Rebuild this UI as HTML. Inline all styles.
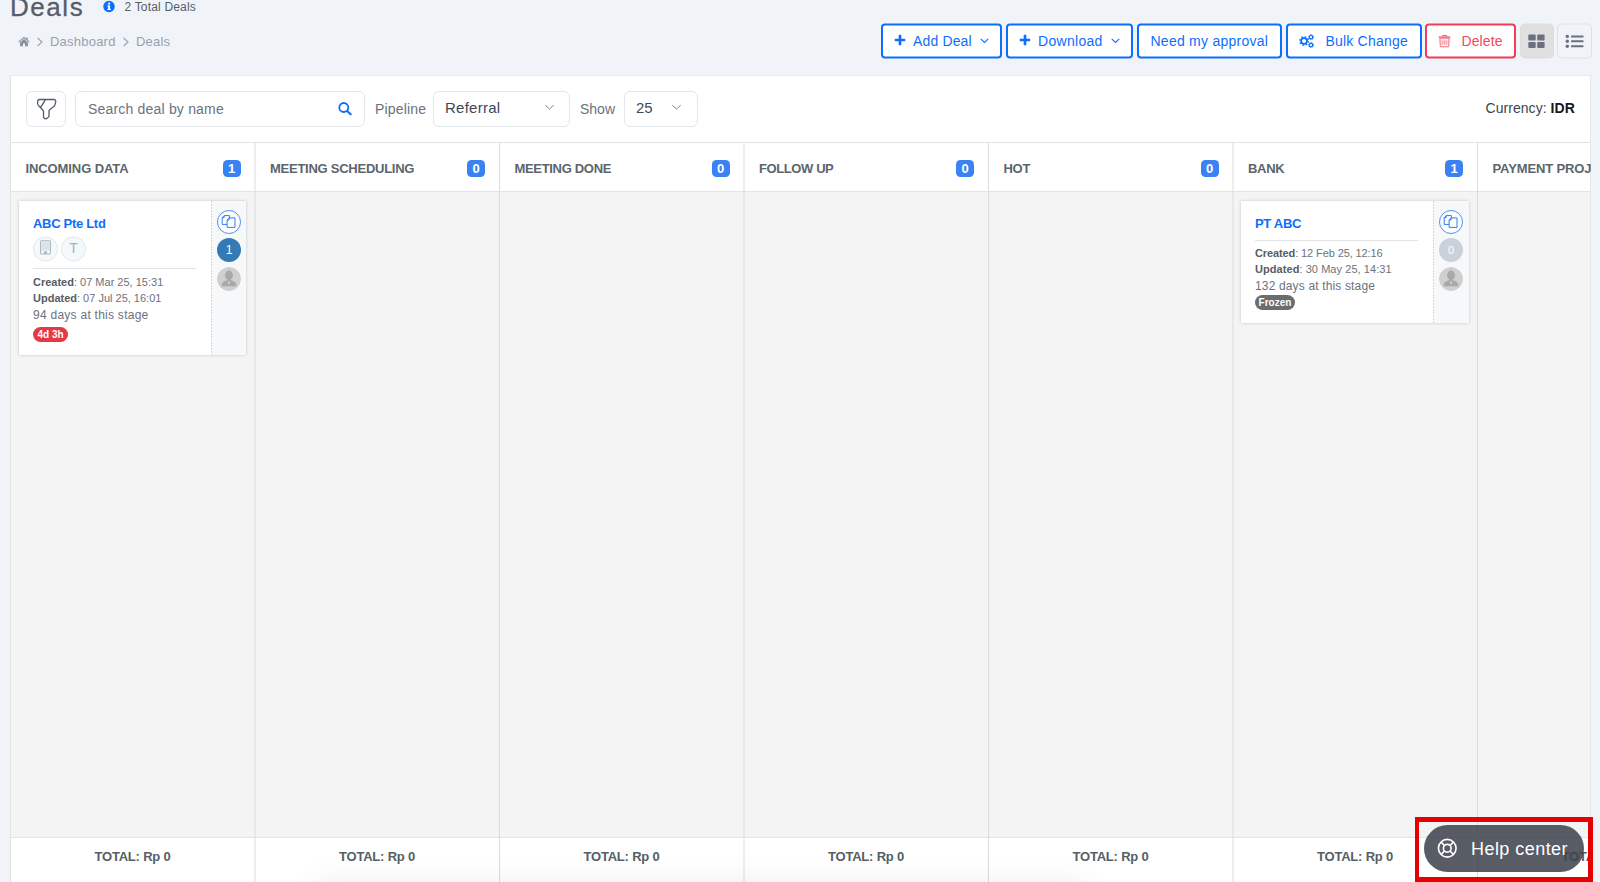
<!DOCTYPE html>
<html lang="en">
<head>
<meta charset="utf-8">
<title>Deals</title>
<style>
*{box-sizing:border-box;margin:0;padding:0}
html,body{width:1600px;height:882px;overflow:hidden}
body{background:#f0f4f9;font-family:"Liberation Sans",Arial,sans-serif;color:#575d6b;position:relative}
.abs{position:absolute}
.t{position:absolute;white-space:nowrap;line-height:1}
/* header */
#title{left:10px;top:-6px;font-size:26px;color:#575d6b;letter-spacing:1.550px;-webkit-text-stroke:.3px #575d6b}
#total{left:124.500px;top:1px;font-size:12px;color:#575d6b;letter-spacing:.18px}
.crumb{font-size:13px;color:#98a1ae;top:34.500px;letter-spacing:.22px}
/* buttons */
.btn{position:absolute;top:24px;height:35px;border:2px solid transparent;color:#0d6efd;font-size:14px}
.btn::before{content:"";position:absolute;left:-2px;top:-2px;right:-2px;bottom:-2px;border:2px solid #0d6efd;border-radius:4px;background:#fff;transform:translateY(-.5px) rotate(.0001deg)}
.btn>*{z-index:1}
.btn .t{top:8px}
.btn.red{color:#f04860}
.btn.red::before{border-color:#f03e57}
.sq{position:absolute;top:24px;width:34px;height:35px;border:1px solid transparent}
.sq::before{content:"";position:absolute;left:-1px;top:-1px;right:-1px;bottom:-1px;border-radius:5px;border:1px solid #dde1e6;background:#f0f4f9;transform:translateY(-.5px) rotate(.0001deg)}
.sq>*{z-index:1}
.sq.on::before{background:#e0e0e0;border-color:#dcdcdc}
/* panel */
#panel{left:10px;top:75px;width:1581px;height:820px;background:#fff;border:1px solid #e9eaec;border-left-color:#e1e2e3;border-right-color:#e6e7e9}
.inp{position:absolute;top:91px;height:36px;border:1px solid #e3e6ea;border-radius:6px;background:#fff}
.lbl{font-size:14px;color:#6a7280;top:102px}
.sel{font-size:15px;color:#3d4858;top:100px}
/* board */
.hline{position:absolute;left:11px;width:1579px;height:1px;background:#e3e3e3}
.col{position:absolute;top:192px;height:646px;background:#f4f4f4}
.vline{position:absolute;top:143px;width:1px;height:739px;background:#dcdcdc}
.hd{font-size:13px;font-weight:bold;color:#5b666c;top:162px;letter-spacing:-.26px}
.bdg{position:absolute;top:160px;width:18px;height:17px;border-radius:4.500px;background:#3a82f4;color:#fff;font-size:13px;font-weight:bold;text-align:center;line-height:17px}
.tot{position:absolute;top:850px;width:244px;text-align:center;font-size:13px;font-weight:bold;color:#545f66;line-height:1;letter-spacing:-.2px}
/* cards */
.card{position:absolute;background:#fff;box-shadow:0 0 3px rgba(120,140,150,.45);border-radius:1px}
.side{position:absolute;right:0;top:0;bottom:0;width:35px;background:#f7f8fa}
.side::before{content:"";position:absolute;left:0;top:0;bottom:0;width:1px;background:repeating-linear-gradient(to bottom,#d4d8dc 0,#d4d8dc 2px,#fbfcfc 2px,#fbfcfc 3px)}
.name{font-size:13px;font-weight:bold;color:#0d6efd;letter-spacing:-.3px}
.meta{font-size:11px;color:#6c727c}
.meta b{color:#575d66}
.stage{font-size:12px;color:#6c727c;letter-spacing:.26px}
.circ{position:absolute;border-radius:50%}
.pill{position:absolute;height:15px;border-radius:8px;color:#fff;font-size:10px;font-weight:bold;line-height:15px;text-align:center}
</style>
</head>
<body>

<!-- page header -->
<div class="t" id="title">Deals</div>
<svg class="abs" style="left:103px;top:0" width="12" height="13" viewBox="0 0 12 13"><circle cx="6" cy="6.500" r="5.700" fill="#0d6efd"/><rect x="5.100" y="5.500" width="2" height="4.200" fill="#fff"/><rect x="4.300" y="5.500" width="2" height="1" fill="#fff"/><rect x="4.300" y="8.900" width="3.600" height="1" fill="#fff"/><circle cx="6.100" cy="3.600" r="1.150" fill="#fff"/></svg>
<div class="t" id="total">2 Total Deals</div>

<svg class="abs" style="left:18px;top:36px" width="12" height="11" viewBox="0 0 12 11"><path d="M6 .8 .2 5.700l.7.800L6 2.200l5.100 4.300.700-.800L9.700 3.900V1.400H8.300v1.300z" fill="#8a92a0"/><path d="M6 3 2 6.400v3.900h3V7.600h2v2.700h3V6.400z" fill="#8a92a0"/></svg>
<svg class="abs" style="left:36px;top:36.500px" width="8" height="10" viewBox="0 0 8 10"><path d="M1.600 1 6 5 1.600 9" fill="none" stroke="#98a1ae" stroke-width="1.100"/></svg>
<div class="t crumb" style="left:50px">Dashboard</div>
<svg class="abs" style="left:122px;top:36.500px" width="8" height="10" viewBox="0 0 8 10"><path d="M1.600 1 6 5 1.600 9" fill="none" stroke="#98a1ae" stroke-width="1.100"/></svg>
<div class="t crumb" style="left:136px">Deals</div>

<!-- action buttons -->
<div class="btn" style="left:881px;width:121px"><svg class="abs" style="left:11px;top:8px" width="12" height="12" viewBox="0 0 12 12"><path d="M6 .8v10.400M.8 6h10.400" stroke="#0d6efd" stroke-width="2.600"/></svg><span class="t" style="left:30px;letter-spacing:.15px">Add Deal</span><svg class="abs" style="left:97px;top:12px" width="9" height="6" viewBox="0 0 9 6"><path d="M.7.800 4.500 4.400 8.300.8" fill="none" stroke="#0d6efd" stroke-width="1.100"/></svg></div>
<div class="btn" style="left:1006px;width:127px"><svg class="abs" style="left:11px;top:8px" width="12" height="12" viewBox="0 0 12 12"><path d="M6 .8v10.400M.8 6h10.400" stroke="#0d6efd" stroke-width="2.600"/></svg><span class="t" style="left:30px;letter-spacing:.3px">Download</span><svg class="abs" style="left:103px;top:12px" width="9" height="6" viewBox="0 0 9 6"><path d="M.7.800 4.500 4.400 8.300.8" fill="none" stroke="#0d6efd" stroke-width="1.100"/></svg></div>
<div class="btn" style="left:1137px;width:145px"><span class="t" style="left:11.500px;letter-spacing:.25px">Need my approval</span></div>
<div class="btn" style="left:1286px;width:136px"><svg class="abs" style="left:10px;top:6px" width="18" height="18" viewBox="0 0 18 18"><g fill="none" stroke="#0d6efd"><circle cx="6.100" cy="9" r="2.900" stroke-width="1.700"/><circle cx="6.100" cy="9" r="4.200" stroke-width="1.400" stroke-dasharray="1.650 1.650"/><circle cx="13" cy="5.200" r="1.700" stroke-width="1.100"/><circle cx="13" cy="5.200" r="2.500" stroke-width="1" stroke-dasharray="1.100 .860"/><circle cx="13" cy="13.100" r="1.700" stroke-width="1.100"/><circle cx="13" cy="13.100" r="2.500" stroke-width="1" stroke-dasharray="1.100 .860"/></g></svg><span class="t" style="left:37.500px;letter-spacing:.2px">Bulk Change</span></div>
<div class="btn red" style="left:1425px;width:91px"><svg class="abs" style="left:11px;top:7.500px" width="13" height="14" viewBox="0 0 13 14"><path d="M4 2.600c0-1.700 5-1.700 5 0" fill="none" stroke="#f2647a" stroke-width="1.100"/><path d="M.6 3.100h11.800" stroke="#f2566e" stroke-width="1.300"/><path d="M1.800 4.200h9.400l-.5 8.600H2.300z" fill="#fbd0d7" stroke="#f3778a" stroke-width="1"/><path d="M3 5.200h7v1.300H3zM3 10.600h7v1.300H3z" fill="#fff" opacity=".75"/><path d="M4.600 6.500v4.100M6.500 6.500v4.100M8.400 6.500v4.100" stroke="#f7a0ad" stroke-width=".9"/></svg><span class="t" style="left:34.500px;letter-spacing:.1px">Delete</span></div>
<div class="sq on" style="left:1520px"><svg class="abs" style="left:7.300px;top:8.700px" width="17" height="15" viewBox="0 0 17 15"><g fill="#6b7080"><rect x=".3" y=".5" width="7.400" height="6" rx="1"/><rect x="9.200" y=".5" width="7.400" height="6" rx="1"/><rect x=".3" y="8" width="7.400" height="6" rx="1"/><rect x="9.200" y="8" width="7.400" height="6" rx="1"/></g></svg></div>
<div class="sq" style="left:1557px;width:35px"><svg class="abs" style="left:7px;top:9px" width="20" height="15" viewBox="0 0 20 15"><g fill="#6b7080"><circle cx="2.300" cy="2.400" r="1.700"/><circle cx="2.300" cy="7.200" r="1.700"/><circle cx="2.300" cy="12.200" r="1.700"/><rect x="6" y="1.400" width="12.500" height="2" rx=".5"/><rect x="6" y="6.200" width="12.500" height="2" rx=".5"/><rect x="6" y="11.200" width="12.500" height="2" rx=".5"/></g></svg></div>

<!-- panel -->
<div class="abs" id="panel"></div>

<div class="inp" style="left:26px;width:40px"></div>
<svg class="abs" style="left:36px;top:96.500px" width="22" height="24" viewBox="0 0 22 24"><path d="M3.200 2.500h14.600q2.200.2 1.900 2.400l-.7 2.800q-.3 1-1.200 1.700L13.600 12.700q-.6.600-.6 1.600v4.700q0 .8-.7 1.300l-2 1.300q-1 .5-2-.3-.8-.6-.8-1.600V15q0-1.200-.8-2L2.600 8.600q-.9-.9-1-2.100V4.400q.1-1.700 1.600-1.900zM9.300 2.800 4.700 10.300" fill="none" stroke="#525b6b" stroke-width="1.300" stroke-linejoin="round" stroke-linecap="round"/></svg>
<div class="inp" style="left:75px;width:290px"></div>
<div class="t" style="left:88px;top:102px;font-size:14px;color:#6a7280;letter-spacing:.19px">Search deal by name</div>
<svg class="abs" style="left:337px;top:101px" width="16" height="15" viewBox="0 0 16 15"><circle cx="6.800" cy="6.500" r="4.500" fill="none" stroke="#0d6efd" stroke-width="1.800"/><path d="M10.100 10 13.700 13.200" stroke="#0d6efd" stroke-width="2.200" stroke-linecap="round"/></svg>
<div class="t lbl" style="left:375px;letter-spacing:.17px">Pipeline</div>
<div class="inp" style="left:433px;width:137px"></div>
<div class="t sel" style="left:445px;letter-spacing:.25px">Referral</div>
<svg class="abs" style="left:544px;top:104px" width="11" height="7" viewBox="0 0 11 7"><path d="M1.300 1.200 5.500 5 9.700 1.200" fill="none" stroke="#7d8590" stroke-width="1"/></svg>
<div class="t lbl" style="left:580px">Show</div>
<div class="inp" style="left:624px;width:74px"></div>
<div class="t sel" style="left:636px">25</div>
<svg class="abs" style="left:671px;top:104px" width="11" height="7" viewBox="0 0 11 7"><path d="M1.300 1.200 5.500 5 9.700 1.200" fill="none" stroke="#7d8590" stroke-width="1"/></svg>
<div class="t" style="left:1485.500px;top:101px;font-size:14px;color:#3d4450;letter-spacing:.05px">Currency: <b style="color:#15181d">IDR</b></div>

<!-- board -->
<div class="hline" style="top:142px"></div>
<div class="hline" style="top:191px"></div>
<div class="col" style="left:11px;width:1579px"></div>
<div class="hline" style="top:837px"></div>
<div class="abs" style="left:11px;top:838px;width:1579px;height:44px;background:#fff"></div>

<div class="vline" style="left:254.0px;width:2px;opacity:.5"></div>
<div class="t hd" style="left:25.5px;letter-spacing:-0.1px">INCOMING DATA</div>
<div class="bdg" style="left:222.5px">1</div>
<div class="tot" style="left:10.5px">TOTAL: Rp 0</div>
<div class="vline" style="left:498.5px"></div>
<div class="t hd" style="left:270.0px;letter-spacing:-0.255px">MEETING SCHEDULING</div>
<div class="bdg" style="left:467.0px">0</div>
<div class="tot" style="left:255.0px">TOTAL: Rp 0</div>
<div class="vline" style="left:743.0px;width:2px;opacity:.5"></div>
<div class="t hd" style="left:514.5px;letter-spacing:-0.32px">MEETING DONE</div>
<div class="bdg" style="left:711.5px">0</div>
<div class="tot" style="left:499.5px">TOTAL: Rp 0</div>
<div class="vline" style="left:987.5px"></div>
<div class="t hd" style="left:759.0px;letter-spacing:-0.4px">FOLLOW UP</div>
<div class="bdg" style="left:956.0px">0</div>
<div class="tot" style="left:744.0px">TOTAL: Rp 0</div>
<div class="vline" style="left:1232.0px;width:2px;opacity:.5"></div>
<div class="t hd" style="left:1003.5px;letter-spacing:-0.3px">HOT</div>
<div class="bdg" style="left:1200.5px">0</div>
<div class="tot" style="left:988.5px">TOTAL: Rp 0</div>
<div class="vline" style="left:1476.5px"></div>
<div class="t hd" style="left:1248.0px;letter-spacing:-0.3px">BANK</div>
<div class="bdg" style="left:1445.0px">1</div>
<div class="tot" style="left:1233.0px">TOTAL: Rp 0</div>
<div class="abs" style="left:1478.5px;top:143px;width:112.0px;height:48px;overflow:hidden"><div class="t hd" style="left:14px;top:19px;letter-spacing:-.12px">PAYMENT PROJ</div></div>
<div class="abs" style="left:1478.5px;top:838px;width:112.0px;height:44px;overflow:hidden"><div class="tot" style="left:-1px;top:12px">TOTAL: Rp 0</div></div>
<!-- card 1 -->
<div class="card" style="left:19px;top:201px;width:227px;height:153.500px">
 <div class="side"></div>
 <div class="t name" style="left:14px;top:16px">ABC Pte Ltd</div>
 <div class="circ" style="left:14px;top:36px;width:25px;height:25px;background:#f6f9fb;border:1px solid #dfe8ec;transform:translateY(-.5px) rotate(.0001deg)"></div>
 <svg class="abs" style="left:20px;top:39px" width="13" height="15" viewBox="0 0 13 15"><rect x="1.500" y=".7" width="10" height="13.300" rx=".6" fill="#eaeff2" stroke="#a9b9c2" stroke-width="1"/><path d="M2.500 3h8M2.500 5h8M2.500 7h8M2.500 9h8" stroke="#c5d0d7" stroke-width=".8"/><rect x="2.300" y="11.300" width="2.200" height="1.700" fill="#fff"/><rect x="8.500" y="11.300" width="2.200" height="1.700" fill="#fff"/><rect x="5.300" y="11.300" width="2.400" height="2.500" fill="#9fb0b9"/></svg>
 <div class="circ" style="left:42px;top:36px;width:25px;height:25px;background:#f6f9fb;border:1px solid #dfe8ec;transform:translateY(-.5px) rotate(.0001deg)"></div>
 <div class="t" style="left:50.200px;top:40px;font-size:14px;color:#a3b3bd">T</div>
 <div class="abs" style="left:14px;top:67px;width:163px;height:1px;background:#e2e4e6"></div>
 <div class="t meta" style="left:14px;top:76px"><b>Created</b>: 07 Mar 25, 15:31</div>
 <div class="t meta" style="left:14px;top:92px"><b>Updated</b>: 07 Jul 25, 16:01</div>
 <div class="t stage" style="left:14px;top:107.500px">94 days at this stage</div>
 <div class="pill" style="left:14px;top:126px;width:35px;background:#e63946">4d 3h</div>
 <div class="circ" style="left:198px;top:9px;width:24px;height:24px;background:#fff;border:1px solid #4d8df7"></div>
 <svg class="abs" style="left:202px;top:14px" width="16" height="14" viewBox="0 0 16 14"><g fill="#fff" stroke="#2f7bf6" stroke-width="1" stroke-linejoin="round"><path d="M1.200 2.600 3.200.6h5.200v8.800H1.200zM3.200.6v2H1.200"/><path d="M6.100 4.900 8.100 2.900h5.900v9.500H6.100zM8.100 2.900v2H6.100"/></g></svg>
 <div class="circ" style="left:198px;top:37px;width:24px;height:24px;background:#337ab7;color:#fff;font-size:12px;text-align:center;line-height:24px">1</div>
 <div class="circ" style="left:198px;top:66px;width:24px;height:24px;overflow:hidden"><svg width="24" height="24" viewBox="0 0 24 24"><circle cx="12" cy="12" r="12" fill="#cfcfcf"/><ellipse cx="12" cy="8.200" rx="3.900" ry="4.700" fill="#a9a9a9"/><path d="M10.400 11h3.200l.3 2.300c2.400.7 4.700 1.500 5.100 3.500.2 1.100.2 1.900.2 2.400H4.800c0-.5 0-1.300.2-2.400.4-2 2.700-2.800 5.100-3.500z" fill="#a9a9a9"/><path d="M10.800 14.500 12 19l1.200-4.500z" fill="#cfcfcf"/></svg></div>
</div>

<!-- card 2 -->
<div class="card" style="left:1241px;top:201px;width:228px;height:122px">
 <div class="side" style="width:36px"></div>
 <div class="t name" style="left:14px;top:16px">PT ABC</div>
 <div class="abs" style="left:14px;top:39px;width:163px;height:1px;background:#e2e4e6"></div>
 <div class="t meta" style="left:14px;top:47px;letter-spacing:-.11px"><b>Created</b>: 12 Feb 25, 12:16</div>
 <div class="t meta" style="left:14px;top:63px;letter-spacing:.06px"><b>Updated</b>: 30 May 25, 14:31</div>
 <div class="t stage" style="left:14px;top:79px;letter-spacing:.15px">132 days at this stage</div>
 <div class="pill" style="left:14px;top:94px;width:40px;background:#6b6c72">Frozen</div>
 <div class="circ" style="left:198px;top:9px;width:24px;height:24px;background:#fff;border:1px solid #4d8df7"></div>
 <svg class="abs" style="left:202px;top:14px" width="16" height="14" viewBox="0 0 16 14"><g fill="#fff" stroke="#2f7bf6" stroke-width="1" stroke-linejoin="round"><path d="M1.200 2.600 3.200.6h5.200v8.800H1.200zM3.200.6v2H1.200"/><path d="M6.100 4.900 8.100 2.900h5.900v9.500H6.100zM8.100 2.900v2H6.100"/></g></svg>
 <div class="circ" style="left:198px;top:37px;width:24px;height:24px;background:#cad1da;color:#fff;font-size:11px;text-align:center;line-height:24px">0</div>
 <div class="circ" style="left:198px;top:66px;width:24px;height:24px;overflow:hidden"><svg width="24" height="24" viewBox="0 0 24 24"><circle cx="12" cy="12" r="12" fill="#cfcfcf"/><ellipse cx="12" cy="8.200" rx="3.900" ry="4.700" fill="#a9a9a9"/><path d="M10.400 11h3.200l.3 2.300c2.400.7 4.700 1.500 5.100 3.500.2 1.100.2 1.900.2 2.400H4.800c0-.5 0-1.300.2-2.400.4-2 2.700-2.800 5.100-3.500z" fill="#a9a9a9"/><path d="M10.800 14.500 12 19l1.200-4.500z" fill="#cfcfcf"/></svg></div>
</div>

<div class="abs" style="left:320px;top:892px;width:760px;height:20px;box-shadow:0 0 36px 4px rgba(0,0,0,.1)"></div>
<!-- help center -->
<div class="abs" style="left:1424px;top:825px;width:160px;height:47px;border-radius:24px;background:rgba(60,65,76,.86)"></div>
<svg class="abs" style="left:1437px;top:838px" width="20.500" height="20.500" viewBox="0 0 20 20"><circle cx="10" cy="10" r="8.600" fill="none" stroke="#fff" stroke-width="1.600"/><circle cx="10" cy="10" r="3.800" fill="none" stroke="#fff" stroke-width="1.600"/><path d="M4 4l3.300 3.300M16 4l-3.300 3.300M4 16l3.300-3.300M16 16l-3.300-3.300" stroke="#fff" stroke-width="1.600"/></svg>
<div class="t" style="left:1471px;top:840px;font-size:18px;color:#fff;letter-spacing:.45px">Help center</div>
<div class="abs" style="left:1415px;top:817px;width:178px;height:66px;border:solid #e60000;border-width:5px 5px 6px 4px"></div>

</body>
</html>
